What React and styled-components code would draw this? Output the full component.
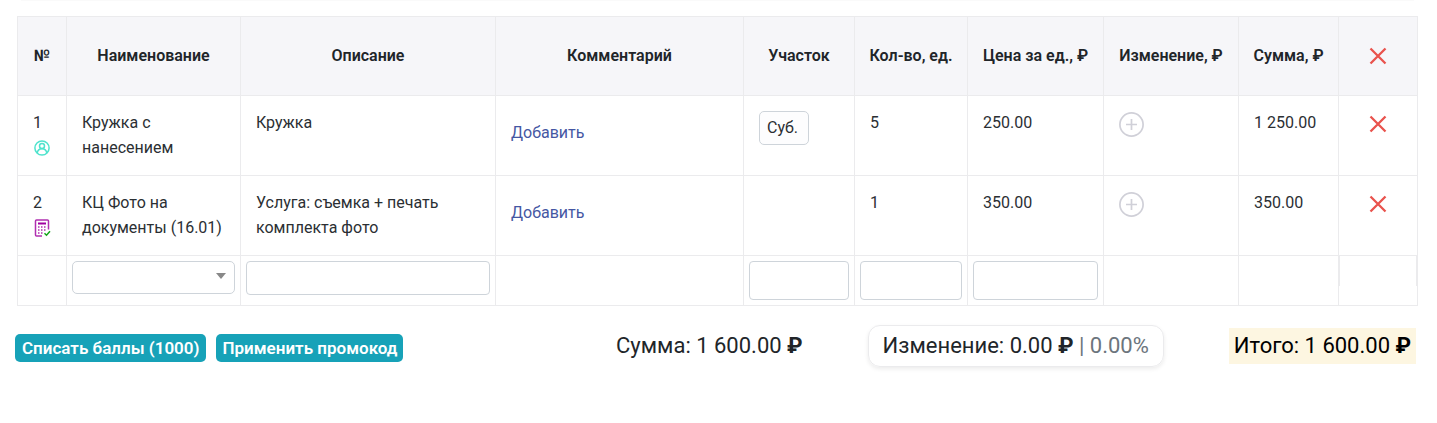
import styled, { createGlobalStyle, css } from "styled-components"

const GlobalStyle = createGlobalStyle`
    * {
        box-sizing: border-box;
    }
    body {
        margin: 0;
        background: #fff;
        color: #212529;
        font-family: Roboto, "Liberation Sans", sans-serif;
        font-size: 16px;
        line-height: 25px;
    }
    button, input, select {
        font: inherit;
        color: inherit;
    }
`

const Page = styled.main`
    padding: 0 19px 24px 17px;
`

const TopEdge = styled.div`
    height: 1px;
    margin: 0 4px 15px;
    background: #fafafa;
`

const OrderTable = styled.table`
    width: 100%;
    table-layout: fixed;
    border-collapse: collapse;

    th, td {
        border: 1px solid #ebebed;
    }
    th {
        height: 79px;
        padding: 0 8px 2px;
        background: #f6f6f9;
        font-weight: 600;
        white-space: nowrap;
    }
`

const Col = styled.col`
    width: ${({ $width }) => $width};
`

const Cell = styled.td`
    height: 80px;
    padding: 14px 15px;
    color: #2b2f33;
    vertical-align: ${({ $middle }) => ($middle ? "middle" : "top")};
    text-align: ${({ $center }) => ($center ? "center" : "left")};
`

const InputCell = styled.td`
    height: 50px;
    padding: ${({ $flush }) => ($flush ? "0" : "5px")};
    vertical-align: top;
`

const EmptyAction = styled.div`
    height: 30px;
    border: solid #ebebed;
    border-width: 0 1px;
`

const ItemIcon = styled.svg`
    display: block;
    width: 18px;
    height: 18px;
    margin-top: 4px;
`

const CommentLink = styled.a`
    display: block;
    margin-top: -6px;
    color: #4557a3;
    text-decoration: none;
`

const AreaButton = styled.button`
    display: block;
    height: 34px;
    margin-top: 1px;
    padding: 0 10px 2px 7px;
    border: 1px solid #ced4da;
    border-radius: 5px;
    background: #fdfdfe;
`

const IconButton = styled.button`
    display: inline-flex;
    padding: 0;
    border: 0;
    background: none;

    svg {
        display: block;
    }
`

const AddButton = styled(IconButton)`
    margin-top: 2px;
`

const DeleteButton = styled(IconButton)`
    vertical-align: middle;
`

const field = css`
    display: block;
    width: 100%;
    border: 1px solid #ced4da;
    border-radius: 4px;
    background: #fff;
`

const TextInput = styled.input`
    ${field}
    height: ${({ $tall }) => ($tall ? "39px" : "34px")};
    padding: 0 8px;
`

const SelectBox = styled.div`
    position: relative;

    svg {
        position: absolute;
        top: 12px;
        right: 9px;
        pointer-events: none;
    }
`

const Select = styled.select`
    ${field}
    height: 33px;
    padding: 0 24px 0 8px;
    border-radius: 5px;
    appearance: none;
`

const Footer = styled.footer`
    display: flex;
    justify-content: space-between;
    align-items: center;
    margin: 19px 2px 0 -2px;
    white-space: nowrap;
`

const Actions = styled.div`
    display: flex;
    gap: 10px;
    padding-top: 4px;
`

const ActionButton = styled.button`
    height: 28px;
    padding: 0 6px 0 7px;
    border: 0;
    border-radius: 5px;
    background: #17a2b8;
    color: #fff;
    font-size: 17px;
    font-weight: 600;
`

const Totals = styled.div`
    display: flex;
    align-items: center;
    gap: 65px;
    font-size: 22px;
    line-height: 36px;
`

const Change = styled.div`
    padding: 0 14px;
    border: 1px solid #ebebed;
    border-radius: 12px;
    box-shadow: 0 2px 4px rgba(0, 0, 0, 0.08);
    line-height: 40px;
`

const Percent = styled.span`
    color: #6c757d;
`

const Total = styled.div`
    padding: 0 5px;
    background: #fdf6e1;
    color: #000;
`

const UserIcon = () => (
    <ItemIcon viewBox="0 0 18 18" fill="none" stroke="#4fe3cd" strokeWidth="1.5">
        <circle cx="9" cy="9" r="7.1" />
        <circle cx="9" cy="7" r="2.5" />
        <path d="M4.3 14c.3-2.8 2-4.2 4.7-4.2s4.400 1.400 4.700 4.200" />
    </ItemIcon>
)

const CalcIcon = () => (
    <ItemIcon viewBox="0 0 18 18" fill="none">
        <path d="M9 17H3.500a1 1 0 0 1-1-1V2a1 1 0 0 1 1-1h11a1 1 0 0 1 1 1V10.500" stroke="#b02fb0" strokeWidth="1.500" />
        <path d="M5 4.500h8" stroke="#a000a0" strokeWidth="2" />
        <path d="M5 8h8.500M5 11h8.500M5 14h5" stroke="#b02fb0" strokeWidth="1.400" strokeDasharray="1.500 1.500" />
        <path d="M11.500 14.200l2 2 3.500-4" stroke="#16a51c" strokeWidth="1.500" />
    </ItemIcon>
)

const PlusIcon = () => (
    <svg width="25" height="25" viewBox="0 0 25 25" fill="none" stroke="#d0d0d8">
        <circle cx="12.500" cy="12.500" r="11.600" strokeWidth="1.700" />
        <path d="M12.500 7v11M7 12.500h11" strokeWidth="1.700" />
    </svg>
)

const CrossIcon = () => (
    <svg width="18" height="18" viewBox="0 0 18 18" fill="none" stroke="#e9534d" strokeWidth="2.300">
        <path d="M1.500 1.500l15 15M16.500 1.500l-15 15" />
    </svg>
)

const widths = ["49px", "174px", "255px", "auto", "111px", "113px", "136px", "135px", "100px", "79px"]

const titles = ["№", "Наименование", "Описание", "Комментарий", "Участок", "Кол-во, ед.", "Цена за ед., ₽", "Изменение, ₽", "Сумма, ₽"]

const items = [
    { id: 1, Icon: UserIcon, name: "Кружка с нанесением", description: "Кружка", area: "Суб.", count: 5, price: "250.00", sum: "1 250.00" },
    { id: 2, Icon: CalcIcon, name: "КЦ Фото на документы (16.01)", description: "Услуга: съемка + печать комплекта фото", count: 1, price: "350.00", sum: "350.00" },
]

const ItemRow = ({ item }) => (
    <tr>
        <Cell>
            {item.id}
            <item.Icon />
        </Cell>
        <Cell>{item.name}</Cell>
        <Cell>{item.description}</Cell>
        <Cell $middle>
            <CommentLink href="#comment">Добавить</CommentLink>
        </Cell>
        <Cell>{item.area && <AreaButton type="button">{item.area}</AreaButton>}</Cell>
        <Cell>{item.count}</Cell>
        <Cell>{item.price}</Cell>
        <Cell>
            <AddButton type="button" aria-label="Добавить изменение"><PlusIcon /></AddButton>
        </Cell>
        <Cell>{item.sum}</Cell>
        <Cell $center>
            <DeleteButton type="button" aria-label="Удалить"><CrossIcon /></DeleteButton>
        </Cell>
    </tr>
)

const NewItemRow = () => (
    <tr>
        <InputCell />
        <InputCell>
            <SelectBox>
                <Select aria-label="Наименование" defaultValue="">
                    <option value="" />
                </Select>
                <svg width="10" height="6" viewBox="0 0 10 6" fill="#888">
                    <path d="M0 0h10L5 6z" />
                </svg>
            </SelectBox>
        </InputCell>
        <InputCell><TextInput aria-label="Описание" /></InputCell>
        <InputCell />
        <InputCell><TextInput $tall aria-label="Участок" /></InputCell>
        <InputCell><TextInput $tall aria-label="Кол-во" /></InputCell>
        <InputCell><TextInput $tall aria-label="Цена за ед." /></InputCell>
        <InputCell />
        <InputCell />
        <InputCell $flush><EmptyAction /></InputCell>
    </tr>
)

const App = () => {
    return (
        <>
            <GlobalStyle />
            <Page>
                <TopEdge />
                <OrderTable>
                    <colgroup>
                        {widths.map((width, i) => <Col key={i} $width={width} />)}
                    </colgroup>
                    <thead>
                        <tr>
                            {titles.map((title) => <th key={title} scope="col">{title}</th>)}
                            <th scope="col">
                                <DeleteButton type="button" aria-label="Удалить все"><CrossIcon /></DeleteButton>
                            </th>
                        </tr>
                    </thead>
                    <tbody>
                        {items.map((item) => <ItemRow key={item.id} item={item} />)}
                        <NewItemRow />
                    </tbody>
                </OrderTable>
                <Footer>
                    <Actions>
                        <ActionButton type="button">Списать баллы (1000)</ActionButton>
                        <ActionButton type="button">Применить промокод</ActionButton>
                    </Actions>
                    <Totals>
                        <div>Сумма: 1 600.00 <b>₽</b></div>
                        <Change>Изменение: 0.00 <b>₽</b> <Percent>| 0.00%</Percent></Change>
                        <Total>Итого: 1 600.00 <b>₽</b></Total>
                    </Totals>
                </Footer>
            </Page>
        </>
    )
}

export default App
